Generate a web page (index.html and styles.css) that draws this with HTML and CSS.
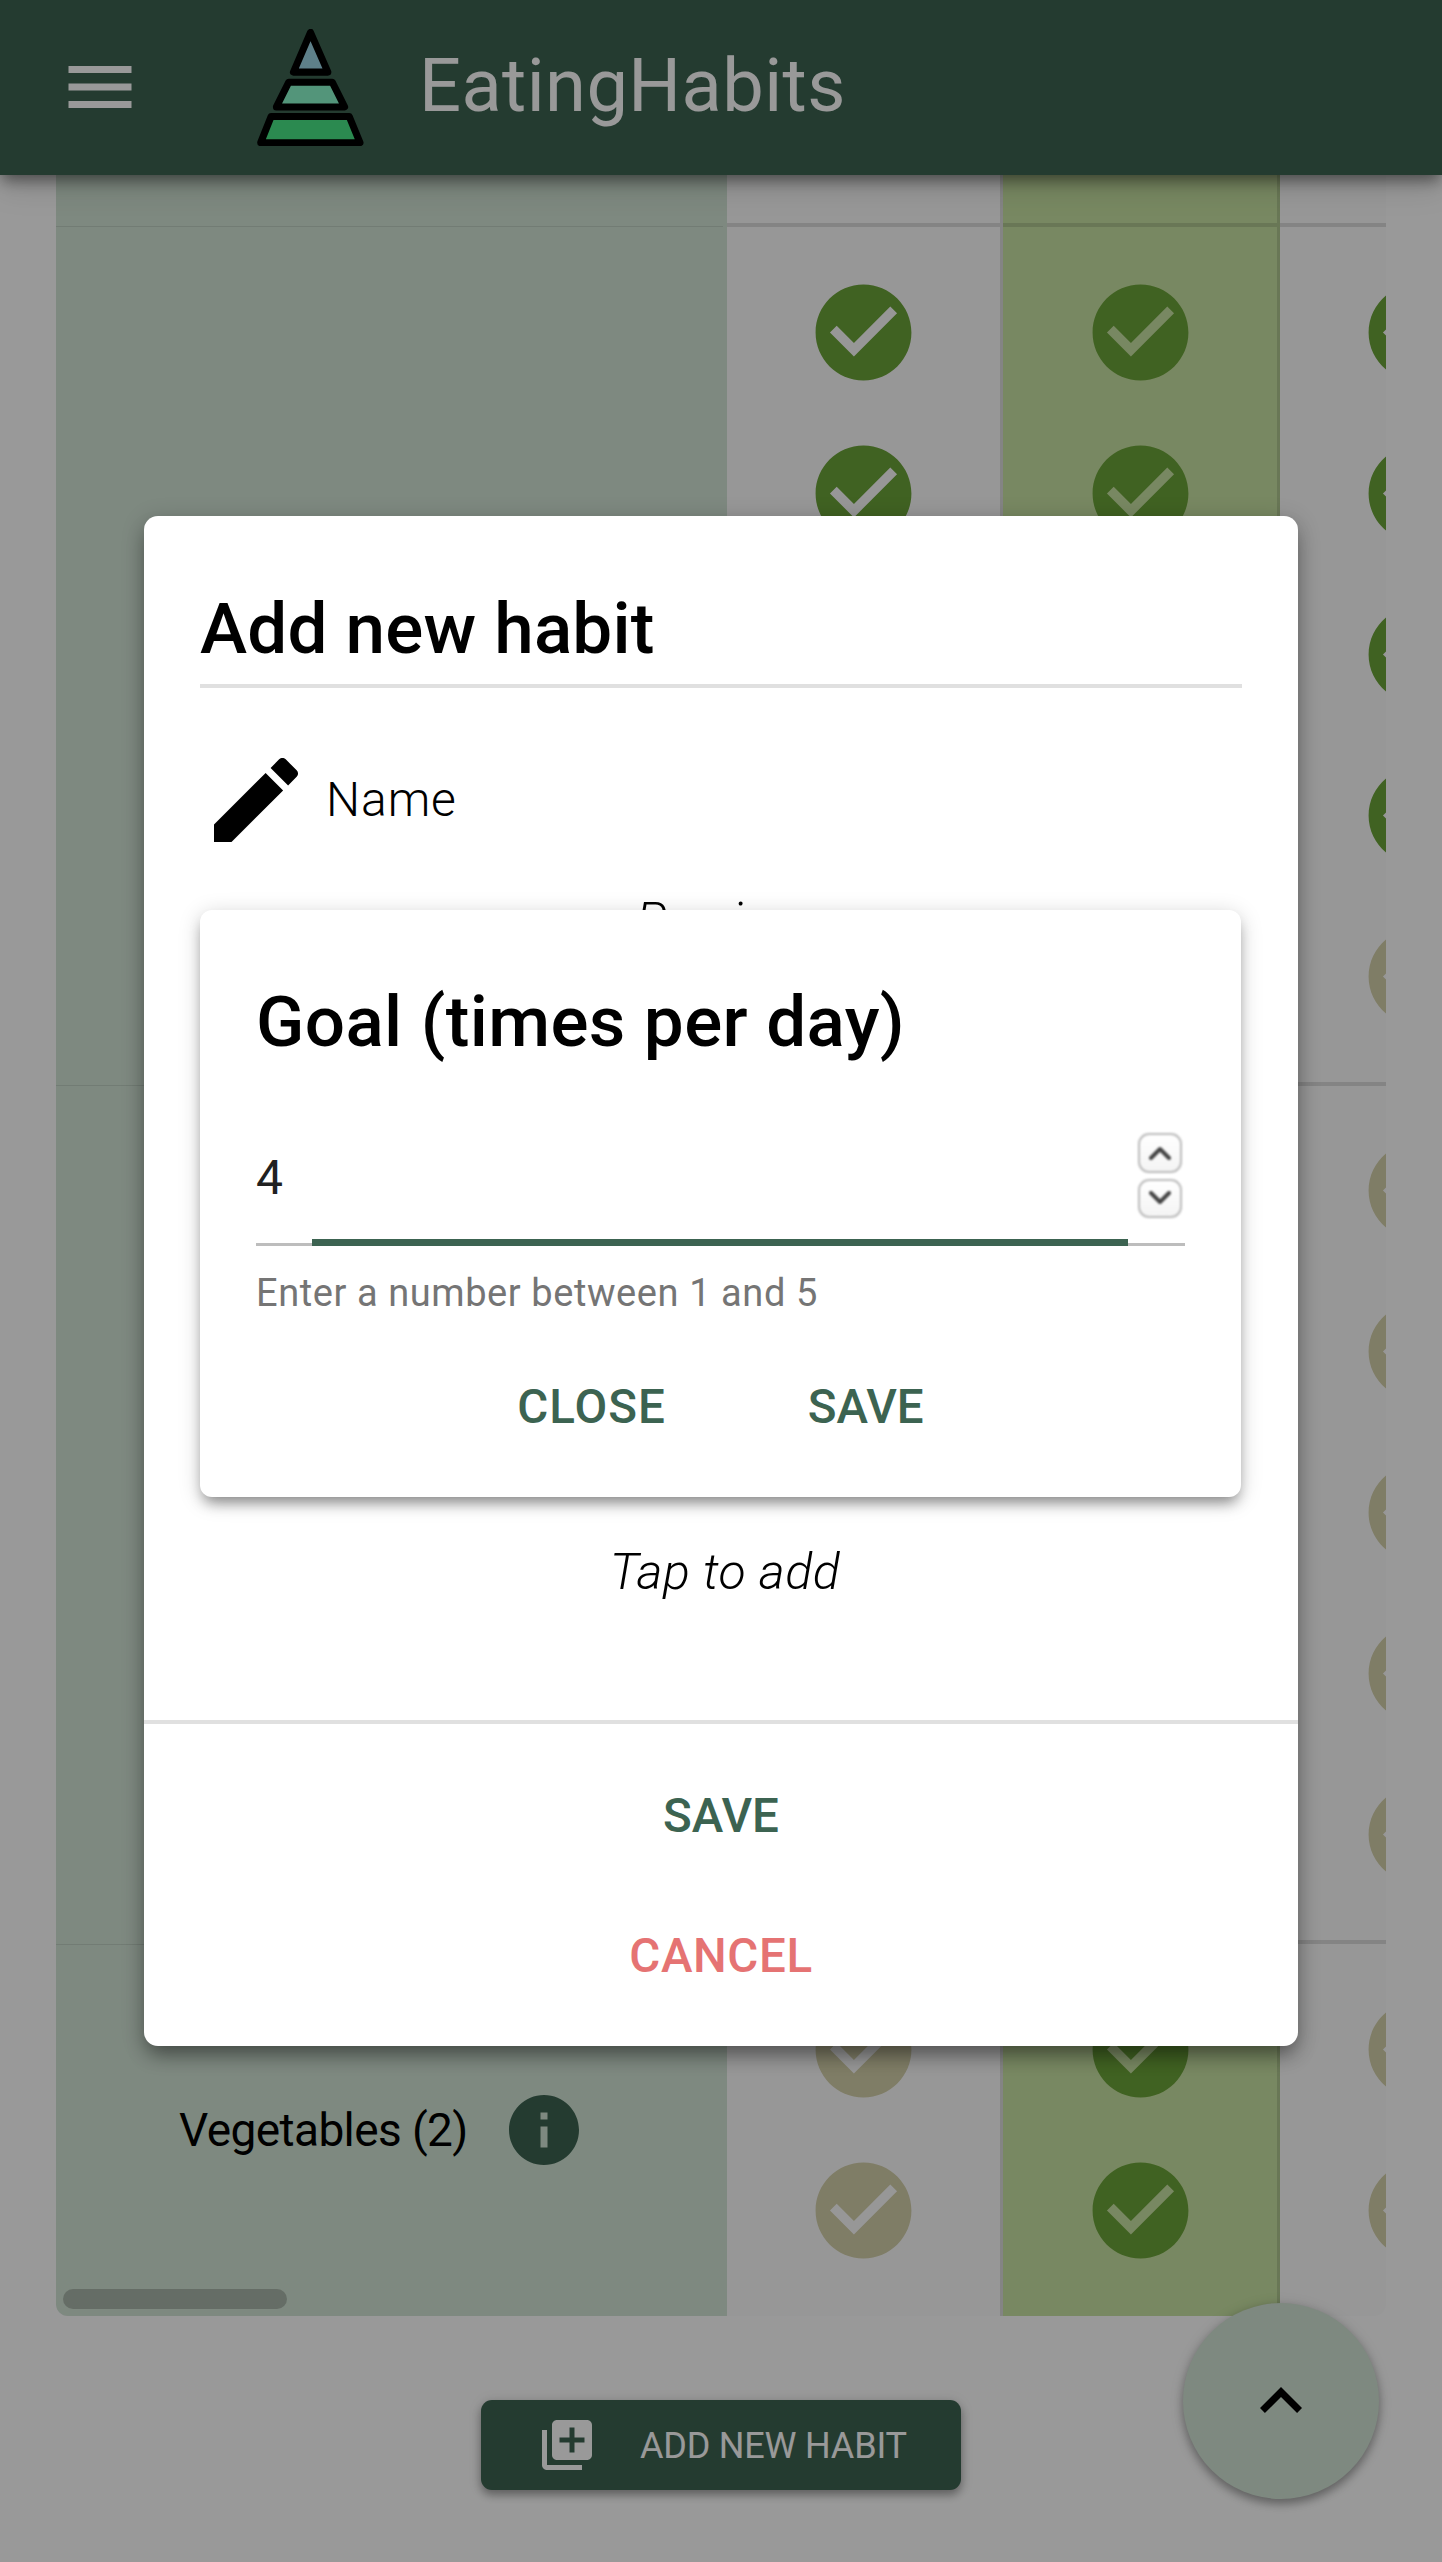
FILE: index.html
```html
<!DOCTYPE html>
<html lang="en">
<head>
<meta charset="utf-8">
<title>EatingHabits</title>
<link rel="stylesheet" href="styles.css">
</head>
<body>
<svg class="defs" width="0" height="0" aria-hidden="true">
  <symbol id="check" viewBox="0 0 24 24"><path d="M12 2C6.48 2 2 6.48 2 12s4.48 10 10 10 10-4.48 10-10S17.52 2 12 2zm-2 15l-5-5 1.41-1.41L10 14.17l7.59-7.59L19 8l-9 9z"/></symbol>
</svg>

<header class="topbar">
  <svg class="menu-icon" viewBox="0 0 24 24"><path d="M3 18h18v-2H3v2zm0-5h18v-2H3v2zm0-7v2h18V6H3z"/></svg>
  <svg class="logo" viewBox="622 55 320 350">
    <polygon class="tier-a" points="782,65 731,184 834,184"/>
    <polygon class="tier-b" points="717,214 847,214 884,288 680,288"/>
    <polygon class="tier-c" points="664,317 898,317 930,395 633,395"/>
  </svg>
  <h1 class="brand">EatingHabits</h1>
</header>

<main class="page">
  <section class="table-card">
    <div class="name-col">
      <div class="name-sec"></div>
      <div class="name-sec"></div>
      <div class="name-sec name-sec-last">
        <span class="group-name">Vegetables (2)</span>
        <svg class="info-icon" viewBox="0 0 24 24"><path d="M12 2C6.48 2 2 6.48 2 12s4.48 10 10 10 10-4.48 10-10S17.52 2 12 2zm1 15h-2v-6h2v6zm0-8h-2V7h2v2z"/></svg>
      </div>
    </div>

    <div class="day-col">
      <div class="day-sec">
        <div class="cell"><svg class="tick done"><use href="#check"/></svg></div>
        <div class="cell"><svg class="tick done"><use href="#check"/></svg></div>
        <div class="cell"><svg class="tick done"><use href="#check"/></svg></div>
        <div class="cell"><svg class="tick done"><use href="#check"/></svg></div>
        <div class="cell"><svg class="tick todo"><use href="#check"/></svg></div>
      </div>
      <div class="day-sec">
        <div class="cell"><svg class="tick todo"><use href="#check"/></svg></div>
        <div class="cell"><svg class="tick todo"><use href="#check"/></svg></div>
        <div class="cell"><svg class="tick todo"><use href="#check"/></svg></div>
        <div class="cell"><svg class="tick todo"><use href="#check"/></svg></div>
        <div class="cell"><svg class="tick todo"><use href="#check"/></svg></div>
      </div>
      <div class="day-sec">
        <div class="cell"><svg class="tick todo"><use href="#check"/></svg></div>
        <div class="cell"><svg class="tick todo"><use href="#check"/></svg></div>
      </div>
    </div>

    <div class="day-col day-col-today">
      <div class="day-sec">
        <div class="cell"><svg class="tick done"><use href="#check"/></svg></div>
        <div class="cell"><svg class="tick done"><use href="#check"/></svg></div>
        <div class="cell"><svg class="tick done"><use href="#check"/></svg></div>
        <div class="cell"><svg class="tick done"><use href="#check"/></svg></div>
        <div class="cell"><svg class="tick done"><use href="#check"/></svg></div>
      </div>
      <div class="day-sec">
        <div class="cell"><svg class="tick done"><use href="#check"/></svg></div>
        <div class="cell"><svg class="tick done"><use href="#check"/></svg></div>
        <div class="cell"><svg class="tick done"><use href="#check"/></svg></div>
        <div class="cell"><svg class="tick done"><use href="#check"/></svg></div>
        <div class="cell"><svg class="tick done"><use href="#check"/></svg></div>
      </div>
      <div class="day-sec">
        <div class="cell"><svg class="tick done"><use href="#check"/></svg></div>
        <div class="cell"><svg class="tick done"><use href="#check"/></svg></div>
      </div>
    </div>

    <div class="day-col day-col-clipped">
      <div class="day-sec">
        <div class="cell"><svg class="tick done"><use href="#check"/></svg></div>
        <div class="cell"><svg class="tick done"><use href="#check"/></svg></div>
        <div class="cell"><svg class="tick done"><use href="#check"/></svg></div>
        <div class="cell"><svg class="tick done"><use href="#check"/></svg></div>
        <div class="cell"><svg class="tick todo"><use href="#check"/></svg></div>
      </div>
      <div class="day-sec">
        <div class="cell"><svg class="tick todo"><use href="#check"/></svg></div>
        <div class="cell"><svg class="tick todo"><use href="#check"/></svg></div>
        <div class="cell"><svg class="tick todo"><use href="#check"/></svg></div>
        <div class="cell"><svg class="tick todo"><use href="#check"/></svg></div>
        <div class="cell"><svg class="tick todo"><use href="#check"/></svg></div>
      </div>
      <div class="day-sec">
        <div class="cell"><svg class="tick todo"><use href="#check"/></svg></div>
        <div class="cell"><svg class="tick todo"><use href="#check"/></svg></div>
      </div>
    </div>

    <div class="scroll-thumb"></div>
  </section>

  <div class="page-actions">
    <button class="add-btn" type="button">
      <svg class="add-icon" viewBox="0 0 24 24"><path d="M4 6H2v14c0 1.1.9 2 2 2h14v-2H4V6zm16-4H8c-1.1 0-2 .9-2 2v12c0 1.1.9 2 2 2h12c1.1 0 2-.9 2-2V4c0-1.1-.9-2-2-2zm-1 9h-4v4h-2v-4H9V9h4V5h2v4h4v2z"/></svg>
      <span class="add-label">ADD NEW HABIT</span>
    </button>
  </div>

  <button class="fab" type="button" aria-label="Scroll to top">
    <svg class="fab-icon" viewBox="0 0 24 24"><path d="M12 8l-6 6 1.41 1.41L12 10.83l4.59 4.58L18 14z"/></svg>
  </button>
</main>

<div class="scrim">
  <div class="dialog">
    <h2 class="dialog-title">Add new habit</h2>
    <div class="name-row">
      <svg class="pencil" viewBox="0 0 24 24"><path d="M3 17.25V21h3.75L17.81 9.94l-3.75-3.75L3 17.25zM20.71 7.04c.39-.39.39-1.02 0-1.41l-2.34-2.34c-.39-.39-1.02-.39-1.41 0l-1.83 1.83 3.75 3.75 1.83-1.83z"/></svg>
      <span class="name-label">Name</span>
    </div>
    <p class="hint hint-preview">Preview</p>
    <p class="hint hint-tap">Tap to add</p>
    <div class="dialog-actions">
      <button class="text-btn primary" type="button">SAVE</button>
      <button class="text-btn danger" type="button">CANCEL</button>
    </div>

    <div class="goal-dialog">
      <h3 class="goal-title">Goal (times per day)</h3>
      <div class="field">
        <span class="field-value">4</span>
        <div class="field-focus"></div>
        <div class="spinner">
          <span class="spin"><svg viewBox="0 0 22 14"><polyline points="2,12 11,3 20,12"/></svg></span>
          <span class="spin"><svg viewBox="0 0 22 14"><polyline points="2,2 11,11 20,2"/></svg></span>
        </div>
      </div>
      <p class="field-help">Enter a number between 1 and 5</p>
      <div class="goal-actions">
        <button class="text-btn primary wide-label" type="button">CLOSE</button>
        <button class="text-btn primary" type="button">SAVE</button>
      </div>
    </div>
  </div>
</div>
</body>
</html>
```

FILE: styles.css
```css
* { box-sizing: border-box; }

html, body {
  margin: 0;
  padding: 0;
}

body {
  position: relative;
  width: 1442px;
  height: 2562px;
  overflow: hidden;
  background: #fff;
  color: #000;
  font-family: Roboto, "Liberation Sans", sans-serif;
}

.defs { position: absolute; }

button {
  border: 0;
  padding: 0;
  background: none;
  font-family: inherit;
  cursor: pointer;
}

/* top bar */
.topbar {
  position: relative;
  z-index: 2;
  display: flex;
  align-items: center;
  height: 175px;
  padding-left: 58px;
  background: #3c6351;
  box-shadow: 0 7px 14px -2px rgba(0, 0, 0, .45), 0 14px 28px rgba(0, 0, 0, .12);
}

.menu-icon {
  width: 84px;
  height: 84px;
  margin-top: -1px;
  fill: #fff;
}

.logo {
  width: 107px;
  height: 117px;
  margin-left: 115px;
  margin-top: -1px;
  flex: none;
}

.logo polygon {
  stroke: #000;
  stroke-width: 21;
  stroke-linejoin: round;
}

.tier-a { fill: #9dd5e6; }
.tier-b { fill: #8af8cb; }
.tier-c { fill: #48e685; }

.brand {
  margin: 0 0 4px 55px;
  color: #fff;
  font-size: 74px;
  font-weight: 400;
  line-height: 1;
  letter-spacing: .4px;
}

/* table */
.page { position: relative; }

.table-card {
  position: relative;
  display: flex;
  width: 1330px;
  height: 2141px;
  margin-left: 56px;
  overflow: hidden;
  border-radius: 0 0 12px 12px;
  background: #fcfcfc;
}

.name-col {
  flex: none;
  width: 671px;
  padding-top: 48px;
  background: #d2e4d5;
}

.name-sec {
  height: 859px;
  margin-top: 3px;
  margin-bottom: -3px;
  margin-right: 4px;
  border-top: 1px solid rgba(0, 0, 0, .09);
}

.name-sec-last {
  display: flex;
  align-items: center;
  height: 375px;
  padding: 0 0 4px 123px;
}

.group-name {
  font-size: 46px;
  font-weight: 400;
  line-height: 56px;
  letter-spacing: -.6px;
  white-space: nowrap;
}

.info-icon {
  flex: none;
  width: 84px;
  height: 84px;
  margin-left: 34px;
  fill: #3c6351;
}

.day-col {
  flex: none;
  width: 273px;
  padding-top: 48px;
}

.day-col-today {
  width: 280px;
  border-left: 3px solid #dcdcdc;
  border-right: 3px solid rgba(0, 0, 0, .12);
  background: #c8e3a3;
}

.day-sec {
  padding: 24.5px 0 25px;
  border-top: 4px solid rgba(0, 0, 0, .12);
}

.cell {
  display: flex;
  align-items: center;
  justify-content: center;
  height: 161px;
}

.tick {
  width: 115px;
  height: 115px;
}

.done { fill: #6ca339; }
.todo { fill: #d4d0aa; }

.scroll-thumb {
  position: absolute;
  left: 7px;
  bottom: 7px;
  width: 224px;
  height: 20px;
  border-radius: 10px;
  background: rgba(0, 0, 0, .2);
}

/* page footer */
.page-actions {
  display: flex;
  justify-content: center;
  padding-top: 84px;
}

.add-btn {
  display: flex;
  align-items: center;
  width: 480px;
  height: 90px;
  padding-left: 56px;
  border-radius: 11px;
  background: #3c6351;
  color: #fff;
  font-size: 36px;
  font-weight: 400;
  letter-spacing: -.2px;
  box-shadow: 0 5px 9px rgba(0, 0, 0, .3), 0 2px 14px rgba(0, 0, 0, .14);
}

.add-label { padding-top: 2px; }

.add-icon {
  flex: none;
  width: 60px;
  height: 60px;
  margin-right: 43px;
  fill: #fff;
}

.fab {
  position: absolute;
  left: 1183px;
  top: 2128px;
  display: flex;
  align-items: center;
  justify-content: center;
  width: 196px;
  height: 196px;
  border-radius: 50%;
  background: #d2e4d5;
  box-shadow: 0 5px 9px rgba(0, 0, 0, .28), 0 2px 14px rgba(0, 0, 0, .16);
}

.fab-icon {
  width: 84px;
  height: 84px;
}

/* dialogs */
.scrim {
  position: absolute;
  inset: 0;
  z-index: 5;
  display: flex;
  align-items: center;
  justify-content: center;
  background: rgba(0, 0, 0, .4);
}

.dialog {
  position: relative;
  display: flex;
  flex-direction: column;
  width: 1154px;
  height: 1530px;
  padding-top: 57px;
  border-radius: 14px;
  background: #fff;
  box-shadow: 0 12px 20px -4px rgba(0, 0, 0, .38), 0 4px 22px 2px rgba(0, 0, 0, .16);
}

.dialog-title {
  margin: 0 56px;
  border-bottom: 4px solid #e0e0e0;
  font-size: 71px;
  font-weight: 500;
  line-height: 112px;
  letter-spacing: .2px;
  height: 115px;
}

.name-row {
  display: flex;
  align-items: center;
  margin: 56px 56px 0;
  gap: 14px;
}

.pencil {
  flex: none;
  width: 112px;
  height: 112px;
}

.name-label {
  font-size: 48px;
  font-weight: 300;
  line-height: 56px;
  letter-spacing: .9px;
}

.hint {
  margin: 0;
  text-align: center;
  font-size: 50px;
  font-weight: 300;
  font-style: italic;
  line-height: 56px;
  letter-spacing: .5px;
}

.hint-preview { margin-top: 37px; }

.hint-tap {
  margin-top: 595px;
  padding-left: 8px;
}

.dialog-actions {
  display: flex;
  flex-direction: column;
  margin-top: auto;
  padding: 22px 0 20px;
  border-top: 4px solid #e0e0e0;
}

.text-btn {
  font-size: 47.5px;
  font-weight: 500;
  line-height: 56px;
}

.wide-label { letter-spacing: 1px; }

.dialog-actions .text-btn {
  height: 140px;
}

.primary { color: #3c6351; }
.danger {
  color: #e57373;
  letter-spacing: .6px;
}

.goal-dialog {
  position: absolute;
  left: 56px;
  top: 394px;
  width: 1041px;
  height: 587px;
  padding: 70px 56px 0;
  border-radius: 12px;
  background: #fff;
  box-shadow: 0 9px 14px -4px rgba(0, 0, 0, .4), 0 4px 22px rgba(0, 0, 0, .18);
}

.goal-title {
  margin: 0;
  font-size: 71px;
  font-weight: 500;
  line-height: 84px;
  letter-spacing: .4px;
}

.field {
  position: relative;
  height: 182px;
  padding-top: 86px;
  border-bottom: 3px solid #bdbdbd;
}

.field-value {
  display: block;
  color: #212121;
  font-size: 48px;
  line-height: 56px;
}

.field-focus {
  position: absolute;
  left: 56px;
  right: 57px;
  bottom: -3px;
  height: 7px;
  background: #3c6351;
}

.spinner {
  position: absolute;
  right: 3px;
  top: 69px;
  display: flex;
  flex-direction: column;
  gap: 6px;
}

.spin {
  display: flex;
  align-items: center;
  justify-content: center;
  width: 44px;
  height: 39.5px;
  border: 2px solid #bbb;
  border-radius: 11px;
  background: linear-gradient(#fff, #f4f4f4);
  filter: blur(.8px);
}

.spin svg {
  width: 22px;
  height: 14px;
  fill: none;
  stroke: #444;
  stroke-width: 4;
  stroke-linecap: round;
  stroke-linejoin: round;
}

.field-help {
  margin: 23px 0 0;
  color: #757575;
  font-size: 38px;
  line-height: 48px;
  letter-spacing: .58px;
}

.goal-actions {
  display: flex;
  justify-content: center;
  gap: 142px;
  margin-top: 62px;
}
```
